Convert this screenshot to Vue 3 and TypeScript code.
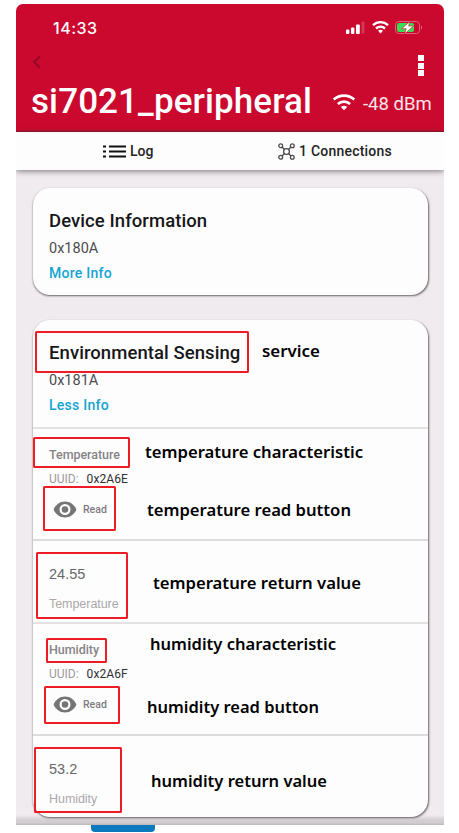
<script setup lang="ts">
interface Characteristic {
  name: string
  uuid: string
  value: string
}

interface Mark {
  x: number
  y: number
  w: number
  h: number
}

interface Note {
  text: string
  x: number
  y: number
  w: number
}

const characteristics: Characteristic[] = [
  { name: 'Temperature', uuid: '0x2A6E', value: '24.55' },
  { name: 'Humidity', uuid: '0x2A6F', value: '53.2' },
]

const marks: Mark[] = [
  { x: 36, y: 332, w: 212, h: 40 },
  { x: 34, y: 438, w: 95, h: 29 },
  { x: 44, y: 487, w: 71, h: 43 },
  { x: 37, y: 553, w: 90, h: 65 },
  { x: 47, y: 639, w: 59, h: 23 },
  { x: 45, y: 687, w: 74, h: 36 },
  { x: 35, y: 748, w: 86, h: 64 },
]

const notes: Note[] = [
  { text: 'service', x: 262, y: 357, w: 58 },
  { text: 'temperature characteristic', x: 145, y: 458, w: 218 },
  { text: 'temperature read button', x: 147, y: 516, w: 204 },
  { text: 'temperature return value', x: 153, y: 589, w: 208 },
  { text: 'humidity characteristic', x: 150, y: 650, w: 186 },
  { text: 'humidity read button', x: 147, y: 713, w: 172 },
  { text: 'humidity return value', x: 151, y: 787, w: 176 },
]
</script>

<template>
  <div class="page">
    <div class="phone">
      <header class="header">
        <div class="status">
          <span class="clock">14:33</span>
          <svg class="status-icons" width="78" height="16" viewBox="0 0 78 16">
            <g fill="#fff">
              <rect x="0" y="10.500" width="3.4" height="4.400" rx="1" />
              <rect x="5" y="8.500" width="3.4" height="6.400" rx="1" />
              <rect x="10" y="5.500" width="3.800" height="9.400" rx="1" />
              <rect x="15.6" y="2.5" width="2.8" height="12" rx="1" opacity=".2" />
            </g>
            <g fill="none" stroke="#fff" stroke-width="2.4">
              <path d="M27 6.200a10.800 10.800 0 0 1 15 0" />
              <path d="M30 9.500a6.600 6.600 0 0 1 9 0" />
            </g>
            <path d="M32 11.800a4 4 0 0 1 5 0L34.500 14.500z" fill="#fff" />
            <rect x="49.500" y="2.5" width="24" height="12" rx="3.2" fill="none" stroke="#e0607a" />
            <path d="M75 6.200c1.600.8 1.600 3.700 0 4.500z" fill="#e0607a" />
            <rect x="51" y="4" width="17" height="9" rx="2" fill="#3ddc55" />
            <path d="M64 2.500l-8.500 7.200h4.700L58.500 15l9-8h-4.900z" fill="#fff" stroke="#cc082e" stroke-width=".6" />
          </svg>
        </div>
        <div class="nav">
          <svg width="10" height="14" viewBox="0 0 10 14">
            <path d="M8.200 1.200L2 7l6.200 5.800" fill="none" stroke="#8d0a24" stroke-width="1.8" />
          </svg>
          <div class="dots"><i></i><i></i><i></i></div>
        </div>
        <div class="device">
          <h1>si7021_peripheral</h1>
          <svg width="24" height="18" viewBox="0 0 24 18">
            <g fill="none" stroke="#fff" stroke-width="2.7">
              <path d="M1.700 6.500a15.500 15.500 0 0 1 20.600 0" />
              <path d="M5.900 11a9.200 9.200 0 0 1 12.200 0" />
            </g>
            <path d="M8.800 14a5.300 5.300 0 0 1 6.400 0L12 17.300z" fill="#fff" />
          </svg>
          <span class="signal">-48 dBm</span>
        </div>
      </header>

      <nav class="tabs">
        <div class="tab log">
          <svg width="23" height="13" viewBox="0 0 23 13">
            <path d="M0 1.500h3M0 6.500h3M0 11.500h3M6 1.500h17M6 6.500h17M6 11.500h17" stroke="#111" stroke-width="2" />
          </svg>
          <span>Log</span>
        </div>
        <div class="tab connections">
          <svg width="17" height="17" viewBox="0 0 17 17" fill="none" stroke="#4a4a4c" stroke-width="1.3">
            <circle cx="2.7" cy="2.7" r="1.9" />
            <circle cx="14.3" cy="2.7" r="1.9" />
            <circle cx="2.7" cy="14.3" r="1.9" />
            <circle cx="14.3" cy="14.3" r="1.9" />
            <circle cx="8.5" cy="8.5" r="2.9" />
            <path d="M4 4l2.500 2.500M13 4l-2.500 2.500M4 13l2.500-2.500M13 13l-2.500-2.500" />
          </svg>
          <span>1 Connections</span>
        </div>
      </nav>

      <main class="content">
        <section class="card">
          <div class="service">
            <h2 class="info-title">Device Information</h2>
            <div class="code">0x180A</div>
            <div class="more">More Info</div>
          </div>
        </section>
        <section class="card">
          <div class="service">
            <h2 class="sensing-title">Environmental Sensing</h2>
            <div class="code">0x181A</div>
            <div class="more">Less Info</div>
          </div>
          <template v-for="c in characteristics" :key="c.uuid">
            <div class="characteristic">
              <div class="name">{{ c.name }}</div>
              <div class="uuid"><span>UUID:</span><b>{{ c.uuid }}</b></div>
              <div class="read">
                <svg width="24" height="17" viewBox="0 0 24 17">
                  <path
                    fill="#757575"
                    fill-rule="evenodd"
                    d="M12 .5C6.800.5 2.500 3.800.6 8.500c1.900 4.700 6.200 8 11.400 8s9.500-3.300 11.400-8C21.500 3.800 17.200.5 12 .5zM12 14a5.500 5.500 0 1 1 0-11 5.500 5.500 0 0 1 0 11zm0-8.800a3.300 3.300 0 1 0 0 6.600 3.300 3.300 0 0 0 0-6.600z"
                  />
                </svg>
                <span>Read</span>
              </div>
            </div>
            <div class="result">
              <div class="value">{{ c.value }}</div>
              <div class="label">{{ c.name }}</div>
            </div>
          </template>
        </section>
      </main>
    </div>
    <div class="button-edge"></div>

    <svg class="annotations" width="459" height="833" viewBox="0 0 459 833">
      <rect v-for="(m, i) in marks" :key="i" :x="m.x" :y="m.y" :width="m.w" :height="m.h" rx=".5" />
      <text
        v-for="n in notes"
        :key="n.text"
        :x="n.x"
        :y="n.y"
        :textLength="n.w"
        lengthAdjust="spacingAndGlyphs"
      >{{ n.text }}</text>
    </svg>
  </div>
</template>

<style>
body {
  background: #fff;
}
</style>

<style scoped>
.page {
  position: relative;
  width: 459px;
  height: 833px;
  padding-top: 4px;
  box-sizing: border-box;
  overflow: hidden;
  font-family: Roboto, sans-serif;
}
.phone {
  width: 428px;
  height: 821px;
  margin-left: 16px;
  background: linear-gradient(to top, #b9b5b9 0, #d0ccd0 2px, #d3cfd3 5px, #efebee 10px);
  border-radius: 7px 7px 0 0;
  overflow: hidden;
  display: flex;
  flex-direction: column;
}
.header {
  height: 128px;
  box-sizing: border-box;
  background: #cb082e;
  border-bottom: 1px solid #980b25;
  color: #fff;
  flex: none;
}
.status {
  display: flex;
  justify-content: space-between;
  height: 48px;
  padding: 15px 21px 0 37px;
  box-sizing: border-box;
}
.clock {
  font: 550 16px/18px Inter, sans-serif;
  letter-spacing: 0.5px;
}
.status-icons {
  margin-right: -1px;
}
.nav {
  display: flex;
  justify-content: space-between;
  height: 28px;
  padding: 3px 20px 0 16px;
}
.dots {
  display: flex;
  flex-direction: column;
  gap: 1.5px;
}
.dots i {
  width: 6px;
  height: 6px;
  background: #fff;
}
.device {
  display: flex;
  align-items: center;
  height: 38px;
  padding-left: 15px;
  white-space: nowrap;
}
h1,
h2 {
  margin: 0;
  font-weight: 500;
}
h1 {
  width: 301px;
  font-size: 35px;
  line-height: 40px;
  letter-spacing: 0.1px;
}
.signal {
  margin-left: 7px;
  padding-top: 4px;
  font-size: 18.5px;
  line-height: 24px;
  opacity: 0.9;
}
.tabs {
  display: flex;
  height: 38px;
  flex: none;
  background: #fefdfe;
  box-shadow: 0 1px 6px rgba(60, 50, 60, 0.65);
  font-size: 14px;
  font-weight: 500;
  color: #242426;
}
.tab {
  display: flex;
  align-items: center;
  white-space: nowrap;
}
.log {
  width: 175px;
  padding-left: 87px;
  gap: 4px;
}
.connections {
  gap: 4px;
  letter-spacing: 0.22px;
}
.content {
  padding: 18px 16px 0 17px;
}
.card {
  margin-bottom: 25px;
  border-radius: 17px;
  background: #fefdfe;
  box-shadow: 0.5px 1px 2px rgba(20, 10, 20, 0.6);
}
.service {
  height: 107px;
  padding: 21px 16px 0;
  box-sizing: border-box;
}
h2 {
  font-size: 18.5px;
  line-height: 25px;
  color: #171719;
}
.info-title {
  letter-spacing: 0.08px;
}
.sensing-title {
  letter-spacing: 0.07px;
}
.code {
  font-size: 14.5px;
  line-height: 30px;
  color: #4c4c4e;
}
.more {
  margin-top: -1px;
  font-size: 14px;
  font-weight: 500;
  line-height: 20px;
  letter-spacing: 0.25px;
  color: #14a5d3;
}
.characteristic {
  height: 112px;
  border-top: 2px solid #e3e1e4;
  padding: 16px 16px 0;
  box-sizing: border-box;
}
.name {
  font-size: 12.5px;
  font-weight: 500;
  line-height: 20px;
  letter-spacing: -0.05px;
  color: #858386;
}
.uuid {
  display: flex;
  gap: 8px;
  font-size: 12px;
  line-height: 28px;
  color: #9c9a9d;
}
.uuid b {
  font-weight: 400;
  letter-spacing: 0.1px;
  color: #303032;
}
.read {
  display: flex;
  align-items: center;
  gap: 6px;
  height: 32px;
  margin-left: 4px;
  font-size: 10.5px;
  font-weight: 500;
  color: #7c7a7d;
}
.result {
  height: 83px;
  border-top: 2px solid #dddbde;
  padding: 21px 16px 0;
  box-sizing: border-box;
  font-family: "Liberation Sans", sans-serif;
}
.value {
  font-size: 14.5px;
  line-height: 24px;
  color: #69676a;
}
.label {
  font-size: 12.5px;
  line-height: 37px;
  letter-spacing: -0.05px;
  color: #aaa8ab;
}
.button-edge {
  width: 64px;
  height: 7px;
  margin-left: 91px;
  background: #0c79bd;
  border-radius: 0 0 4px 4px;
}
.annotations {
  position: absolute;
  left: 0;
  top: 0;
}
.annotations rect {
  fill: none;
  stroke: #ee1c24;
  stroke-width: 2;
}
.annotations text {
  font: 600 16.5px "Noto Sans", "Open Sans", sans-serif;
  fill: #000;
}
</style>
